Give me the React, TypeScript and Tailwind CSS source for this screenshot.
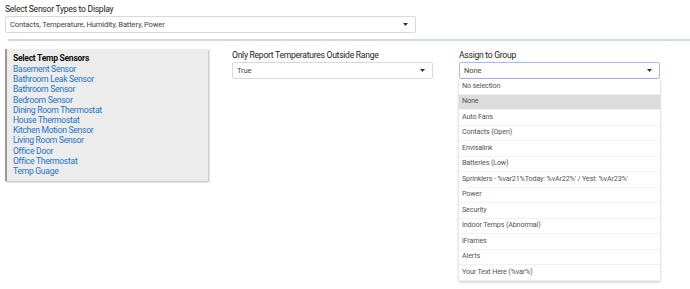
const sensors = [
  "Basement Sensor",
  "Bathroom Leak Sensor",
  "Bathroom Sensor",
  "Bedroom Sensor",
  "Dining Room Thermostat",
  "House Thermostat",
  "Kitchen Motion Sensor",
  "Living Room Sensor",
  "Office Door",
  "Office Thermostat",
  "Temp Guage",
];

const groups = [
  "No selection",
  "None",
  "Auto Fans",
  "Contacts (Open)",
  "Envisalink",
  "Batteries (Low)",
  "Sprinklers - %var21%Today: %vAr22%' / Yest: %vAr23%'",
  "Power",
  "Security",
  "Indoor Temps (Abnormal)",
  "iFrames",
  "Alerts",
  "Your Text Here (%var%)",
];

const Caret = () => (
  <svg width="5" height="3" viewBox="0 0 5 3" className="shrink-0">
    <path d="M0 0h5L2.5 3z" fill="#333" />
  </svg>
);

const Select = ({ value, focused = false, className = "" }: { value: string; focused?: boolean; className?: string }) => (
  <div
    className={`flex h-[17px] items-center justify-between rounded-[2px] border bg-white pl-[4px] pr-[7px] text-[7.6px] tracking-[-0.15px] text-[#444] ${
      focused ? "border-[#9fbfe6]" : "border-[#d9d9d9]"
    } ${className}`}
  >
    <span>{value}</span>
    <Caret />
  </div>
);

const App = () => {
  return (
    <div className="h-[289px] w-[690px] overflow-hidden bg-white font-['Roboto',sans-serif] text-[#222]">
      <div className="pl-[5px] pt-[4px]">
        <div className="mb-[1px] text-[8.6px] leading-[11px] tracking-[-0.28px]">Select Sensor Types to Display</div>
        <Select value="Contacts, Temperature, Humidity, Battery, Power" className="w-[411px]" />
      </div>

      <div className="ml-[8px] mt-[6px] h-[2px] bg-[#c8dbec]" />

      <div className="flex items-start pt-[8px]">
        <div className="ml-[5px] w-[203px] border-l-2 border-[#9a9a9a] bg-[#ececec] pb-[5px] pl-[6px] pt-[4px] shadow-[1px_1px_2px_rgba(0,0,0,0.3)]">
          <div className="text-[8.6px] font-bold leading-[11px] tracking-[-0.3px] text-[#111]">Select Temp Sensors</div>
          {sensors.map((s) => (
            <div key={s} className="text-[8.6px] leading-[10.2px] tracking-[-0.3px] text-[#1b74c9]">
              {s}
            </div>
          ))}
        </div>

        <div className="ml-[24px] w-[201px] pt-[1px]">
          <div className="mb-[1px] text-[8.6px] leading-[11px] tracking-[-0.28px]">Only Report Temperatures Outside Range</div>
          <Select value="True" />
        </div>

        <div className="ml-[26px] w-[201px] pt-[1px]">
          <div className="mb-[1px] text-[8.6px] leading-[11px] tracking-[-0.28px]">Assign to Group</div>
          <Select value="None" focused />
          <div className="bg-white shadow-[0_1px_3px_rgba(0,0,0,0.25)]">
            {groups.map((g) => (
              <div
                key={g}
                className={`flex h-[15.5px] items-center border-b border-[#f2f2f2] pl-[3px] text-[7.2px] tracking-[-0.15px] text-[#555] ${
                  g === "None" ? "bg-[#dcdcdc]" : ""
                }`}
              >
                {g}
              </div>
            ))}
          </div>
        </div>
      </div>
    </div>
  );
};

export default App;
